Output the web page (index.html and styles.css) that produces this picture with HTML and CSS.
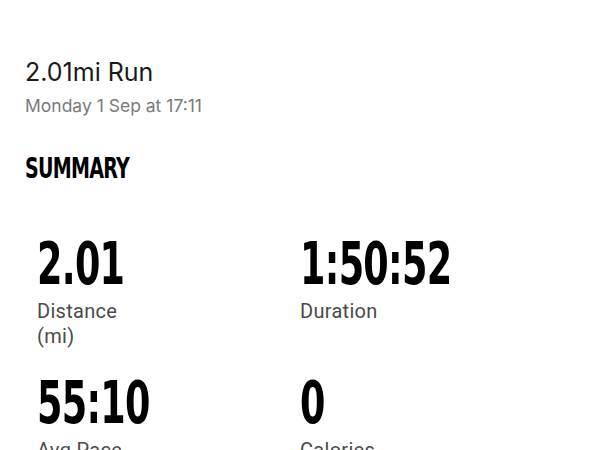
FILE: index.html
```html
<!DOCTYPE html>
<html>
<head>
<meta charset="utf-8">
<link rel="stylesheet" href="styles.css">
</head>
<body>
<main class="page">
  <header class="activity-head">
    <h1 class="title">2.01mi Run</h1>
    <p class="date">Monday 1 Sep at 17:11</p>
  </header>
  <h2 class="section-title">SUMMARY</h2>
  <section class="stats">
    <div class="stat">
      <div class="value">2.01</div>
      <div class="label">Distance (mi)</div>
    </div>
    <div class="stat">
      <div class="value">1:50:52</div>
      <div class="label">Duration</div>
    </div>
    <div class="stat">
      <div class="value">55:10</div>
      <div class="label">Avg Pace</div>
    </div>
    <div class="stat">
      <div class="value">0</div>
      <div class="label">Calories</div>
    </div>
  </section>
</main>
</body>
</html>
```
FILE: styles.css
```css
html, body {
  margin: 0;
  padding: 0;
  background: #ffffff;
}
.page {
  padding: 57px 25px 0;
  font-family: "Inter", "Liberation Sans", sans-serif;
}
.activity-head {
  display: flex;
  flex-direction: column;
  gap: 8px;
}
.title {
  margin: 0;
  font-size: 25px;
  line-height: 30px;
  font-weight: 400;
  color: #1a1a1a;
}
.date {
  margin: 0;
  font-size: 17.5px;
  line-height: 22px;
  color: #7a7a7a;
}
.section-title {
  margin: 34px 0 0;
  font-family: "DejaVu Sans Condensed", "DejaVu Sans", sans-serif;
  font-weight: 700;
  font-size: 29px;
  line-height: 34px;
  letter-spacing: -1px;
  color: #000;
  transform: scaleX(0.73);
  transform-origin: left center;
}
.stats {
  margin-top: 49px;
  padding: 0 12px;
  display: grid;
  grid-template-columns: 1fr 1fr;
  row-gap: 24px;
}
.stat {
  display: flex;
  flex-direction: column;
  gap: 5px;
}
.value {
  font-family: "DejaVu Sans Condensed", "DejaVu Sans", sans-serif;
  font-weight: 700;
  font-size: 58px;
  line-height: 60px;
  letter-spacing: -1px;
  color: #000;
  transform: scaleX(0.7);
  transform-origin: left center;
}
.label {
  max-width: 100px;
  font-family: "Roboto", "Liberation Sans", sans-serif;
  font-size: 20px;
  line-height: 25px;
  letter-spacing: 0.3px;
  color: #4a4a4a;
}
```
